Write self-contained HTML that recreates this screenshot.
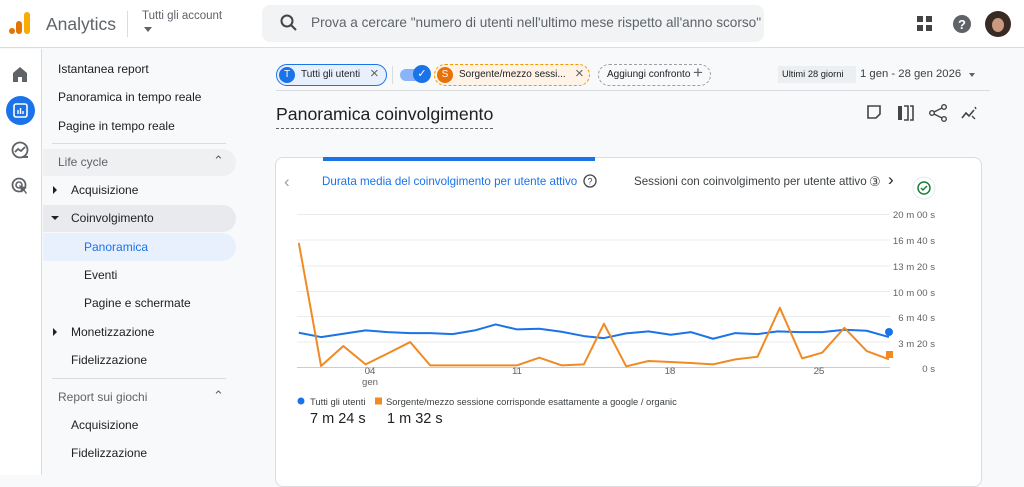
<!DOCTYPE html><html><head><meta charset="utf-8"><style>
*{margin:0;padding:0;box-sizing:border-box}
body{width:1024px;height:475px;overflow:hidden;background:#f8f9fa;font-family:"Liberation Sans",Arial,sans-serif;color:#202124;position:relative}
.a{position:absolute;white-space:nowrap}
.nav{font-size:12px;color:#202124}
</style></head><body>
<div class="a" style="left:0;top:0;width:1024px;height:48px;background:#fff;border-bottom:1px solid #dadce0"></div>
<svg class="a" style="left:8px;top:10px" width="26" height="26"><rect x="16" y="2" width="6" height="22" rx="3" fill="#f9ab00"/><rect x="8" y="11" width="6" height="13" rx="3" fill="#e37400"/><circle cx="4" cy="21" r="3" fill="#e37400"/></svg>
<div class="a" style="left:46px;top:14px;font-size:17.5px;color:#5f6368">Analytics</div>
<div class="a" style="left:127px;top:11px;width:1px;height:26px;background:#dadce0"></div>
<div class="a" style="left:142px;top:10px;font-size:11.5px;color:#5f6368">Tutti gli account</div>
<div class="a" style="left:144px;top:27px;width:0;height:0;border-left:4px solid transparent;border-right:4px solid transparent;border-top:5px solid #5f6368"></div>
<div class="a" style="left:262px;top:5px;width:502px;height:37px;background:#f1f3f4;border-radius:8px"></div>
<svg class="a" style="left:280px;top:14px" width="18" height="18"><circle cx="7" cy="7" r="5.5" fill="none" stroke="#444" stroke-width="2"/><path d="M11 11l5 5" stroke="#444" stroke-width="2"/></svg>
<div class="a" style="left:311px;top:15px;font-size:13.6px;color:#5f6368">Prova a cercare "numero di utenti nell'ultimo mese rispetto all'anno scorso"</div>
<svg class="a" style="left:916px;top:15px" width="18" height="18"><g fill="#444"><rect x="1" y="1" width="6" height="6"/><rect x="10" y="1" width="6" height="6"/><rect x="1" y="10" width="6" height="6"/><rect x="10" y="10" width="6" height="6"/></g></svg>
<svg class="a" style="left:952px;top:14px" width="20" height="20"><circle cx="10" cy="10" r="9" fill="#5f6368"/><text x="10" y="15" font-size="13" font-weight="bold" fill="#fff" text-anchor="middle" font-family="Liberation Sans">?</text></svg>
<svg class="a" style="left:985px;top:11px" width="26" height="26"><circle cx="13" cy="13" r="13" fill="#3a2a24"/><ellipse cx="13" cy="14" rx="6" ry="7" fill="#c99a80"/></svg>
<div class="a" style="left:0;top:49px;width:42px;height:426px;background:#fff;border-right:1px solid #dadce0"></div>
<svg class="a" style="left:11px;top:65px" width="18" height="18"><path d="M2 8L9 2l7 6v9h-5v-5H7v5H2z" fill="#5f6368"/></svg>
<div class="a" style="left:6px;top:96px;width:29px;height:29px;border-radius:50%;background:#1a73e8"></div>
<svg class="a" style="left:13px;top:103px" width="15" height="15"><rect x="1" y="1" width="13" height="13" rx="2" fill="none" stroke="#fff" stroke-width="1.6"/><path d="M5 11V7M7.5 11V5M10 11V8" stroke="#fff" stroke-width="1.4"/></svg>
<svg class="a" style="left:11px;top:141px" width="18" height="18"><circle cx="9" cy="9" r="7.5" fill="none" stroke="#5f6368" stroke-width="1.8"/><path d="M4 11l3-3 3 2 4-4" fill="none" stroke="#5f6368" stroke-width="1.8"/><path d="M11 16h6" stroke="#5f6368" stroke-width="2"/></svg>
<svg class="a" style="left:11px;top:177px" width="18" height="18"><circle cx="8" cy="8" r="6.5" fill="none" stroke="#5f6368" stroke-width="1.8"/><circle cx="8" cy="8" r="3" fill="none" stroke="#5f6368" stroke-width="1.6"/><path d="M8 8l8 3-3 1 3 4-1 1-3-4-1 3z" fill="#5f6368"/></svg>
<div class="a nav" style="left:58px;top:62px">Istantanea report</div>
<div class="a nav" style="left:58px;top:90px">Panoramica in tempo reale</div>
<div class="a nav" style="left:58px;top:119px">Pagine in tempo reale</div>
<div class="a" style="left:52px;top:143px;width:174px;height:1px;background:#dadce0"></div>
<div class="a" style="left:43px;top:149px;width:193px;height:27px;background:#eef0f2;border-radius:0 14px 14px 0"></div>
<div class="a nav" style="left:58px;top:155px;color:#5f6368">Life cycle</div>
<div class="a" style="left:213px;top:153px;font-size:13px;color:#5f6368">⌃</div>
<div class="a" style="left:53px;top:186px;border-top:4px solid transparent;border-bottom:4px solid transparent;border-left:4px solid #202124"></div>
<div class="a nav" style="left:71px;top:183px">Acquisizione</div>
<div class="a" style="left:43px;top:205px;width:193px;height:27px;background:#e8eaed;border-radius:0 14px 14px 0"></div>
<div class="a" style="left:51px;top:216px;border-left:4px solid transparent;border-right:4px solid transparent;border-top:4px solid #202124"></div>
<div class="a nav" style="left:71px;top:211px">Coinvolgimento</div>
<div class="a" style="left:43px;top:233px;width:193px;height:28px;background:#e8f0fe;border-radius:0 14px 14px 0"></div>
<div class="a nav" style="left:84px;top:240px;color:#1a73e8">Panoramica</div>
<div class="a nav" style="left:84px;top:268px">Eventi</div>
<div class="a nav" style="left:84px;top:296px">Pagine e schermate</div>
<div class="a" style="left:53px;top:328px;border-top:4px solid transparent;border-bottom:4px solid transparent;border-left:4px solid #202124"></div>
<div class="a nav" style="left:71px;top:325px">Monetizzazione</div>
<div class="a nav" style="left:71px;top:353px">Fidelizzazione</div>
<div class="a" style="left:52px;top:378px;width:174px;height:1px;background:#dadce0"></div>
<div class="a nav" style="left:58px;top:390px;color:#5f6368">Report sui giochi</div>
<div class="a" style="left:213px;top:388px;font-size:13px;color:#5f6368">⌃</div>
<div class="a nav" style="left:71px;top:418px">Acquisizione</div>
<div class="a nav" style="left:71px;top:446px">Fidelizzazione</div>

<div class="a" style="left:276px;top:64px;width:111px;height:22px;border:1px solid #1a73e8;background:#e8f0fe;border-radius:11px"></div>
<div class="a" style="left:279px;top:67px;width:16px;height:16px;border-radius:50%;background:#1a73e8;color:#fff;font-size:10px;text-align:center;line-height:16px">T</div>
<div class="a" style="left:301px;top:69px;font-size:10px">Tutti gli utenti</div>
<div class="a" style="left:370px;top:65px;font-size:15px;color:#5f6368">×</div>
<div class="a" style="left:392px;top:66px;width:1px;height:18px;background:#dadce0"></div>
<div class="a" style="left:400px;top:69px;width:24px;height:12px;border-radius:6px;background:#8ab4f8"></div>
<div class="a" style="left:413px;top:65px;width:18px;height:18px;border-radius:50%;background:#1a73e8;color:#fff;font-size:11px;text-align:center;line-height:18px">✓</div>
<div class="a" style="left:434px;top:64px;width:156px;height:22px;border:1px dashed #f29900;background:#fef3e6;border-radius:11px"></div>
<div class="a" style="left:437px;top:67px;width:16px;height:16px;border-radius:50%;background:#e8710a;color:#fff;font-size:10px;text-align:center;line-height:16px">S</div>
<div class="a" style="left:459px;top:69px;font-size:10px">Sorgente/mezzo sessi...</div>
<div class="a" style="left:575px;top:65px;font-size:15px;color:#5f6368">×</div>
<div class="a" style="left:598px;top:64px;width:113px;height:22px;border:1px dashed #9aa0a6;border-radius:11px"></div>
<div class="a" style="left:607px;top:69px;font-size:10px">Aggiungi confronto</div>
<div class="a" style="left:693px;top:63px;font-size:17px;color:#5f6368">+</div>
<div class="a" style="left:778px;top:66px;width:78px;height:17px;background:#eceff1"></div>
<div class="a" style="left:782px;top:69px;font-size:9.3px;color:#202124">Ultimi 28 giorni</div>
<div class="a" style="left:860px;top:68px;font-size:11.3px;color:#3c4043">1 gen - 28 gen 2026</div>
<div class="a" style="left:969px;top:73px;border-left:3.5px solid transparent;border-right:3.5px solid transparent;border-top:4px solid #5f6368"></div>
<div class="a" style="left:276px;top:90px;width:714px;height:1px;background:#dadce0"></div>
<div class="a" style="left:276px;top:104px;font-size:17.7px;color:#202124;border-bottom:1px dashed #5f6368;padding-bottom:3px">Panoramica coinvolgimento</div>
<svg class="a" style="left:866px;top:104px" width="115" height="20"><path d="M2 2h12v8l-4 4H2z" fill="none" stroke="#444" stroke-width="1.6"/><path d="M34 2v14M38 2h4v14h-4M44 2h3v14h-3" fill="none" stroke="#444" stroke-width="1.6"/><rect x="32" y="2" width="4" height="14" fill="#444"/><circle cx="78" cy="3" r="2.3" fill="none" stroke="#444" stroke-width="1.4"/><circle cx="66" cy="9" r="2.3" fill="none" stroke="#444" stroke-width="1.4"/><circle cx="78" cy="15" r="2.3" fill="none" stroke="#444" stroke-width="1.4"/><path d="M68 8l8-4M68 10l8 4" stroke="#444" stroke-width="1.4"/><path d="M96 14l4-5 3 3 5-6" fill="none" stroke="#444" stroke-width="1.6"/><path d="M106 12l3 3M109 3l1 2" stroke="#444" stroke-width="1.4"/></svg>

<div class="a" style="left:275px;top:157px;width:707px;height:330px;background:#fff;border:1px solid #dadce0;border-radius:8px"></div>
<div class="a" style="left:323px;top:157px;width:272px;height:4px;background:#1a73e8"></div>
<div class="a" style="left:284px;top:172px;font-size:17px;color:#9aa0a6">‹</div>
<div class="a" style="left:322px;top:175px;font-size:11.6px;color:#1a73e8">Durata media del coinvolgimento per utente attivo</div>
<svg class="a" style="left:583px;top:174px" width="14" height="14"><circle cx="7" cy="7" r="6" fill="none" stroke="#444" stroke-width="1.3"/><text x="7" y="10.5" font-size="9" text-anchor="middle" fill="#444" font-family="Liberation Sans">?</text></svg>
<div class="a" style="left:634px;top:175px;font-size:11.6px;color:#3c4043">Sessioni con coinvolgimento per utente attivo</div>
<div class="a" style="left:869px;top:174px;font-size:13px;color:#444">③</div>
<div class="a" style="left:884px;top:168px;width:22px;height:24px;background:#fff"></div>
<div class="a" style="left:888px;top:170px;font-size:17px;color:#202124">›</div>
<svg class="a" style="left:912px;top:176px" width="24" height="24"><circle cx="12" cy="12" r="11" fill="#fff" stroke="#e8eaed"/><circle cx="12" cy="12" r="6" fill="none" stroke="#188038" stroke-width="1.5"/><path d="M9 12l2 2 4-4" fill="none" stroke="#188038" stroke-width="1.5"/></svg>

<svg class="a" style="left:0;top:0" width="1024" height="475">
<g stroke="#ebebeb" stroke-width="1"><path d="M297 214.5H890M297 240H890M297 266H890M297 291.5H890M297 316.5H890M297 342H890"/><path d="M297 367.5H890" stroke="#ccc"/><path d="M370 368v5M517 368v5M670 368v5M819 368v5" stroke="#ccc"/></g>
<g font-family="Liberation Sans" font-size="9.6" fill="#5f6368" text-anchor="end"><text x="935" y="218">20 m 00 s</text><text x="935" y="244">16 m 40 s</text><text x="935" y="270">13 m 20 s</text><text x="935" y="296">10 m 00 s</text><text x="935" y="321">6 m 40 s</text><text x="935" y="347">3 m 20 s</text><text x="935" y="372">0 s</text></g>
<g font-family="Liberation Sans" font-size="9.6" fill="#5f6368" text-anchor="middle"><text x="370" y="374">04</text><text x="370" y="385">gen</text><text x="517" y="374">11</text><text x="670" y="374">18</text><text x="819" y="374">25</text></g>
<g transform="translate(281 204.7) scale(0.4454 0.3326)" fill="none" stroke-width="2" stroke-linejoin="round">
<polyline vector-effect="non-scaling-stroke" stroke="#1a73e8" points="40,385 90,398 140,388 190,378 240,383 290,386 335,386 385,389 435,378 482,360 530,375 580,373 630,382 680,395 725,401 775,387 825,381 875,391 920,383 970,403 1020,386 1070,389 1115,381 1165,383 1215,383 1265,376 1315,379 1365,398"/>
<polyline vector-effect="non-scaling-stroke" stroke="#f08a24" points="40,115 90,485 140,425 190,480 240,447 290,413 335,483 385,483 435,483 482,483 530,483 580,460 630,483 680,480 725,358 775,486 825,470 875,473 920,476 970,480 1020,465 1070,457 1120,310 1170,462 1215,445 1265,370 1315,440 1365,465"/>
</g>
<circle cx="889" cy="332" r="4" fill="#1a73e8"/>
<rect x="886" y="351" width="7" height="7" fill="#f08a24"/>
<circle cx="301" cy="401" r="3.5" fill="#1a73e8"/>
<rect x="375" y="397.5" width="7" height="7" fill="#f08a24"/>
<g font-family="Liberation Sans" font-size="9.4" fill="#3c4043"><text x="310" y="405">Tutti gli utenti</text><text x="386" y="405">Sorgente/mezzo sessione corrisponde esattamente a google / organic</text></g>
<g font-family="Liberation Sans" font-size="14.5" fill="#202124"><text x="310" y="423">7 m 24 s</text><text x="387" y="423">1 m 32 s</text></g>
</svg>
</body></html>
